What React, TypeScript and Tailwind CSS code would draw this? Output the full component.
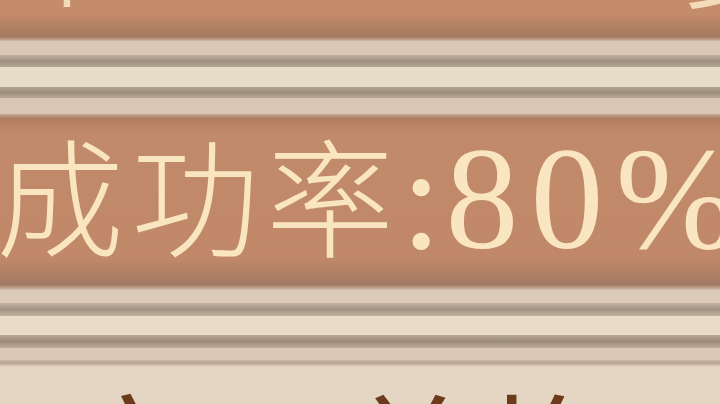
export default function App() {
  return (
    <div className="w-[720px] h-[404px] overflow-hidden bg-[#e4d6c2] flex flex-col" style={{ fontFamily: '"Liberation Serif", "Noto Sans CJK SC", serif' }}>
      {/* top band, only the feet of the line above show */}
      <div className="h-[37px] shrink-0 overflow-hidden bg-linear-to-b from-[#c58c6c] from-40% via-[#bd8667] to-[#a37a5f] flex justify-between px-[2px]">
        <span className="text-[130px] leading-none text-[#f3dcbc] -translate-y-[112px] font-light">个</span>
        <span className="text-[130px] leading-none text-[#f3dcbc] -translate-y-[110px] -mr-[96px] font-light">少</span>
      </div>

      {/* divider rails */}
      <div className="h-[4px] shrink-0 bg-linear-to-b from-[#a67c62] to-[#cdb9a6]" />
      <div className="h-[14px] shrink-0 bg-[#d9c8b5]" />
      <div className="h-[12px] shrink-0 bg-linear-to-b from-[#c0b09e] via-[#9f9080] to-[#b5a794]" />
      <div className="h-[20px] shrink-0 bg-[#e6dcc7]" />
      <div className="h-[11px] shrink-0 bg-linear-to-b from-[#b3a590] via-[#9c8d79] to-[#b8a895]" />
      <div className="h-[16px] shrink-0 bg-[#d9c7b3]" />
      <div className="h-[5px] shrink-0 bg-linear-to-b from-[#c4aa96] to-[#a6785a]" />

      {/* rate bar */}
      <div className="h-[166px] shrink-0 bg-linear-to-b from-[#b17c5e] from-0% via-[#c18a6a] via-8% to-[#c08868] flex flex-col">
        <div className="flex-1 bg-linear-to-b from-transparent from-84% to-[#a07a62] flex items-center">
          <div className="flex items-baseline whitespace-nowrap leading-none text-[#f9e6c1] -ml-[4px] -mt-[6px]">
            <span className="text-[128px] font-light tracking-[7px]">成功率</span>
            <span className="text-[146px] tracking-[4px]">:</span>
            <span className="text-[146px] tracking-[12px]">80%</span>
          </div>
        </div>
      </div>

      {/* lower rails */}
      <div className="h-[5px] shrink-0 bg-linear-to-b from-[#a27a61] to-[#d2c0ad]" />
      <div className="h-[13px] shrink-0 bg-[#dccbb8]" />
      <div className="h-[13px] shrink-0 bg-linear-to-b from-[#c2b2a0] via-[#a49484] to-[#c0b19f]" />
      <div className="h-[19px] shrink-0 bg-[#e8dcc8]" />
      <div className="h-[13px] shrink-0 bg-linear-to-b from-[#b7a894] via-[#9c8c78] to-[#bdae9b]" />
      <div className="h-[12px] shrink-0 bg-[#d9c9b6]" />
      <div className="h-[6px] shrink-0 bg-linear-to-b from-[#c9b8a5] via-[#b6a591] to-[#d8c9b6]" />

      {/* next row, only the top of its label shows */}
      <div className="flex-1 bg-[#e4d6c2] pl-[66px] pt-[30px]">
        <span className="text-[128px] leading-none tracking-[12px] text-[#6c3b1c]">宝石兑换</span>
      </div>
    </div>
  );
}
